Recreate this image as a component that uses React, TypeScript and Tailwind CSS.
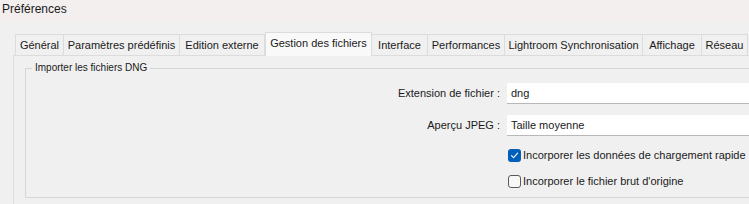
export default function App() {
  const tabs = [
    { label: 'Général', w: 'w-[49px]' },
    { label: 'Paramètres prédéfinis', w: 'w-[116px]' },
    { label: 'Edition externe', w: 'w-[85px]' },
    { label: 'Gestion des fichiers', w: 'w-[107px]', active: true },
    { label: 'Interface', w: 'w-[56px]' },
    { label: 'Performances', w: 'w-[77px]' },
    { label: 'Lightroom Synchronisation', w: 'w-[138px]' },
    { label: 'Affichage', w: 'w-[59px]' },
    { label: 'Réseau', w: 'w-[46px]' },
  ];

  return (
    <div className="w-[749px] h-[204px] overflow-hidden bg-[#f0f0f0] text-[11px] text-[#1a1a1a] font-['Liberation_Sans',sans-serif] whitespace-nowrap">
      {/* title bar */}
      <div className="h-[22px] bg-[#f3efee] pl-[2px] pt-[2px] leading-[14px] text-[12px]">Préférences</div>

      <div className="pl-[13px] pt-[11px]">
        {/* tabs */}
        <div className="flex items-end h-[22px] pl-[2px]">
          {tabs.map((t) =>
            t.active ? (
              <div
                key={t.label}
                className={`${t.w} shrink-0 h-[24px] -mb-[1px] relative z-10 bg-[#f9f9f9] border border-b-0 border-[#dcdcdc] flex items-center justify-center leading-none pb-[3px]`}
              >
                {t.label}
              </div>
            ) : (
              <div
                key={t.label}
                className={`${t.w} shrink-0 h-[21px] bg-[#f0f0f0] border border-l-0 first:border-l border-b-0 border-[#dcdcdc] flex items-center justify-center leading-none`}
              >
                {t.label}
              </div>
            )
          )}
        </div>

        {/* panel */}
        <div className="h-[160px] border-t border-l border-[#dcdcdc] bg-[#f0f0f0] pl-[11px] pt-[12px]">
          <div className="relative h-[130px] border border-r-0 border-[#d5d5d5]">
            <span className="absolute -top-[8px] left-[6px] px-[3px] bg-[#f0f0f0] text-[10px] leading-[14px]">
              Importer les fichiers DNG
            </span>

            <div className="flex flex-col pt-[14px]">
              <div className="flex items-center h-[21px]">
                <span className="w-[481px] shrink-0 text-right pr-[7px]">Extension de fichier :</span>
                <div className="flex-1 h-[21px] bg-white border-b border-[#b8b8b8] pl-[4px] flex items-center">dng</div>
              </div>
              <div className="flex items-center h-[21px] mt-[11px]">
                <span className="w-[481px] shrink-0 text-right pr-[7px]">Aperçu JPEG :</span>
                <div className="flex-1 h-[21px] bg-white border-b border-[#b8b8b8] pl-[4px] flex items-center">Taille moyenne</div>
              </div>

              <div className="pl-[482px]">
                <label className="flex items-center mt-[12px] h-[15px]">
                  <span className="w-[13px] h-[13px] shrink-0 rounded-[3px] bg-[#005fb8] flex items-center justify-center">
                    <svg width="9" height="9" viewBox="0 0 9 9" fill="none">
                      <path d="M1.5 4.6 L3.6 6.6 L7.6 2.2" stroke="white" strokeWidth="1.1" strokeLinecap="round" strokeLinejoin="round" />
                    </svg>
                  </span>
                  <span className="ml-[2px]">Incorporer les données de chargement rapide</span>
                </label>
                <label className="flex items-center mt-[11px] h-[15px]">
                  <span className="w-[13px] h-[13px] shrink-0 rounded-[3px] border border-[#5a5a5a] bg-[#f7f7f7]" />
                  <span className="ml-[2px]">Incorporer le fichier brut d'origine</span>
                </label>
              </div>
            </div>
          </div>
        </div>
      </div>
    </div>
  );
}
